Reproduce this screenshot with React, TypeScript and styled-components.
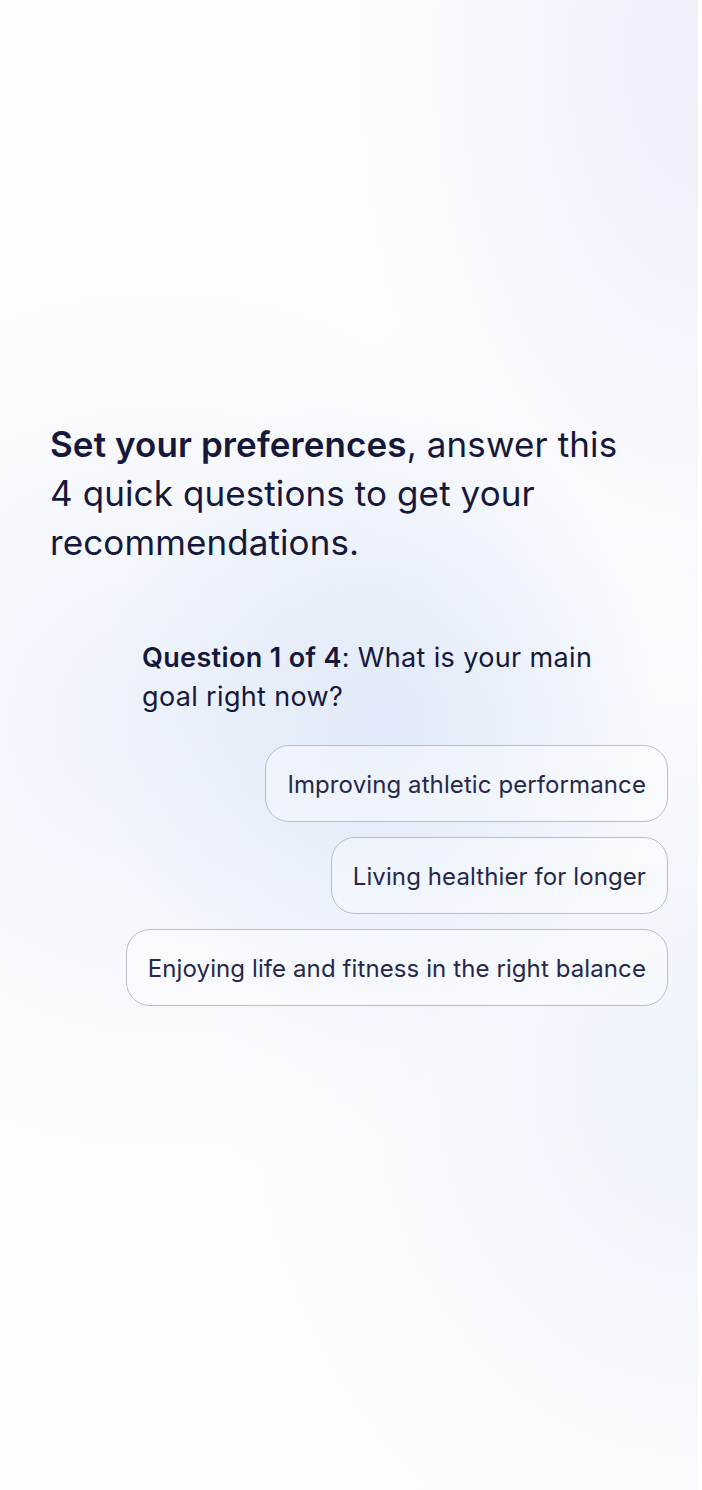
import React from 'react';
import styled, { createGlobalStyle } from 'styled-components';

const options = [
  'Improving athletic performance',
  'Living healthier for longer',
  'Enjoying life and fitness in the right balance',
];

const App: React.FC = () => {
  return (
    <>
      <GlobalStyle />
      <Page>
        <Intro>
          <Strong>Set your preferences</Strong>, answer this 4 quick questions to get your
          recommendations.
        </Intro>
        <QuestionBlock>
          <Question>
            <Strong>Question 1 of 4</Strong>: What is your main goal right now?
          </Question>
          <Options>
            {options.map((label) => (
              <OptionButton key={label}>{label}</OptionButton>
            ))}
          </Options>
        </QuestionBlock>
      </Page>
    </>
  );
};

const GlobalStyle = createGlobalStyle`
  html, body {
    margin: 0;
    padding: 0;
    background: #ffffff;
  }

  body {
    font-family: Inter, "Noto Sans", "Liberation Sans", sans-serif;
    color: #16183a;
  }
`;

const Page = styled.main`
  width: 698px;
  min-height: 1490px;
  box-sizing: border-box;
  padding: 420px 30px 0 50px;
  display: flex;
  flex-direction: column;
  background:
    radial-gradient(ellipse 280px 330px at 380px 720px, rgba(222, 232, 248, 0.9), rgba(222, 232, 248, 0) 100%),
    radial-gradient(ellipse 360px 620px at 700px 60px, rgba(240, 236, 250, 0.95), rgba(240, 236, 250, 0) 100%),
    radial-gradient(ellipse 480px 560px at 700px 1080px, rgba(236, 242, 250, 0.9), rgba(236, 242, 250, 0) 100%),
    radial-gradient(ellipse 480px 460px at 160px 720px, rgba(236, 241, 250, 0.85), rgba(236, 241, 250, 0) 100%),
    #fdfdff;
`;

const Strong = styled.span`
  font-weight: 600;
`;

const Intro = styled.p`
  margin: 0;
  max-width: 580px;
  font-size: 35px;
  line-height: 49px;
  font-weight: 400;
  letter-spacing: 0.1px;
`;

const QuestionBlock = styled.section`
  margin-top: 71px;
  display: flex;
  flex-direction: column;
  gap: 29px;
`;

const Question = styled.p`
  margin: 0 0 0 92px;
  max-width: 470px;
  font-size: 27px;
  line-height: 39px;
  font-weight: 400;
  letter-spacing: 0.35px;
`;

const Options = styled.div`
  display: flex;
  flex-direction: column;
  align-items: flex-end;
  gap: 15px;
`;

const OptionButton = styled.button`
  box-sizing: border-box;
  height: 77px;
  padding: 2px 21px 0;
  border: 1.5px solid #b9bdcc;
  border-radius: 24px;
  background: rgba(255, 255, 255, 0.35);
  font-family: inherit;
  font-size: 24px;
  font-weight: 400;
  letter-spacing: 0.1px;
  white-space: nowrap;
  color: #25284a;
  cursor: pointer;
`;

export default App;
